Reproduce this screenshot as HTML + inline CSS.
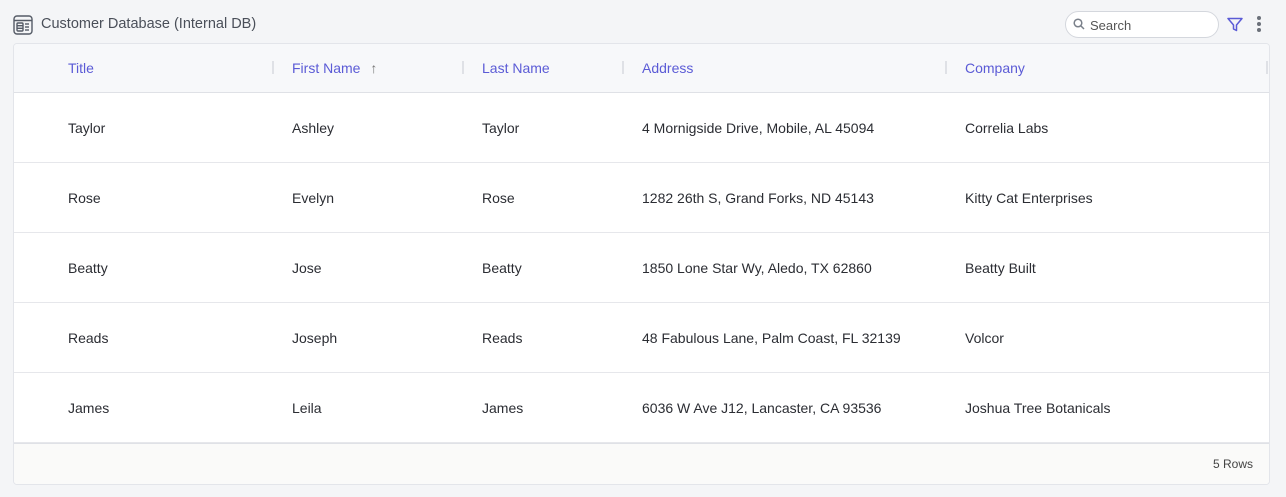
<!DOCTYPE html>
<html><head><style>
body{margin:0;width:1286px;height:497px;background:#f4f5f7;font-family:"Liberation Sans",sans-serif;position:relative;overflow:hidden}
.t{position:absolute;white-space:nowrap}
.box{position:absolute;left:13px;top:43px;width:1255px;height:440px;border:1px solid #e3e5ea;border-radius:4px;background:#fff;overflow:hidden}
.hdr{position:absolute;left:0;top:0;width:100%;height:48px;background:#f7f8fa;border-bottom:1px solid #dfe1e6}
.h{position:absolute;top:16px;font-size:14px;color:#5b5bd6}
.sep{position:absolute;top:17px;width:2px;height:13px;background:#dfe1e6}
.row{position:absolute;left:0;width:100%;height:69px;border-bottom:1px solid #e6e7eb}
.c{position:absolute;top:27px;font-size:14px;color:#2b2d33}
.ft{position:absolute;left:0;top:399px;width:100%;height:41px;background:#fafaf9;border-top:1px solid #dfe1e6}
</style></head><body>
<svg class="t" style="left:13px;top:15px" width="20" height="20" viewBox="0 0 20 20" fill="none" stroke="#555b66" stroke-width="1.4"><rect x="1" y="1" width="18" height="18" rx="3"/><line x1="1" y1="5.5" x2="19" y2="5.5"/><rect x="4" y="8" width="6" height="8" rx="1"/><line x1="4" y1="10.7" x2="10" y2="10.7"/><line x1="4" y1="13.3" x2="10" y2="13.3"/><line x1="12" y1="9" x2="16" y2="9"/><line x1="12" y1="12" x2="16" y2="12"/><line x1="12" y1="15" x2="16" y2="15"/></svg>
<div class="t" style="left:41px;top:16px;font-size:14.5px;color:#4a4f59">Customer Database (Internal DB)</div>
<div class="t" style="left:1065px;top:11px;width:154px;height:27px;border:1px solid #d4d7dd;border-radius:14px;background:#fff;box-sizing:border-box"></div>
<svg class="t" style="left:1073px;top:18px" width="12" height="12" viewBox="0 0 12 12" fill="none" stroke="#7a808a" stroke-width="1.5"><circle cx="5" cy="5" r="3.8"/><line x1="8" y1="8" x2="11" y2="11"/></svg>
<div class="t" style="left:1090px;top:18px;font-size:13px;color:#555">Search</div>
<svg class="t" style="left:1227px;top:17px" width="16" height="15" viewBox="0 0 16 15" fill="none" stroke="#5b5bd6" stroke-width="1.5" stroke-linejoin="round"><path d="M1 1.5h14l-5.5 6.5v5.5l-3-1.5v-4z"/></svg>
<div class="t" style="left:1257px;top:16px;width:4px;height:4px;border-radius:2px;background:#6b7079;box-shadow:0 6px 0 #6b7079,0 12px 0 #6b7079"></div>
<div class="box">
<div class="hdr">
<div class="h" style="left:54px">Title</div><div class="sep" style="left:258px"></div>
<div class="h" style="left:278px">First Name <span style="color:#777;margin-left:6px">↑</span></div><div class="sep" style="left:448px"></div>
<div class="h" style="left:468px">Last Name</div><div class="sep" style="left:608px"></div>
<div class="h" style="left:628px">Address</div><div class="sep" style="left:931px"></div>
<div class="h" style="left:951px">Company</div><div class="sep" style="left:1252px"></div>
</div>
<div class="row" style="top:49px"><div class="c" style="left:54px">Taylor</div><div class="c" style="left:278px">Ashley</div><div class="c" style="left:468px">Taylor</div><div class="c" style="left:628px">4 Mornigside Drive, Mobile, AL 45094</div><div class="c" style="left:951px">Correlia Labs</div></div>
<div class="row" style="top:119px"><div class="c" style="left:54px">Rose</div><div class="c" style="left:278px">Evelyn</div><div class="c" style="left:468px">Rose</div><div class="c" style="left:628px">1282 26th S, Grand Forks, ND 45143</div><div class="c" style="left:951px">Kitty Cat Enterprises</div></div>
<div class="row" style="top:189px"><div class="c" style="left:54px">Beatty</div><div class="c" style="left:278px">Jose</div><div class="c" style="left:468px">Beatty</div><div class="c" style="left:628px">1850 Lone Star Wy, Aledo, TX 62860</div><div class="c" style="left:951px">Beatty Built</div></div>
<div class="row" style="top:259px"><div class="c" style="left:54px">Reads</div><div class="c" style="left:278px">Joseph</div><div class="c" style="left:468px">Reads</div><div class="c" style="left:628px">48 Fabulous Lane, Palm Coast, FL 32139</div><div class="c" style="left:951px">Volcor</div></div>
<div class="row" style="top:329px"><div class="c" style="left:54px">James</div><div class="c" style="left:278px">Leila</div><div class="c" style="left:468px">James</div><div class="c" style="left:628px">6036 W Ave J12, Lancaster, CA 93536</div><div class="c" style="left:951px">Joshua Tree Botanicals</div></div>
<div class="ft"><div class="t" style="right:16px;top:13px;font-size:12px;color:#444">5 Rows</div></div>
</div>
</body></html>
